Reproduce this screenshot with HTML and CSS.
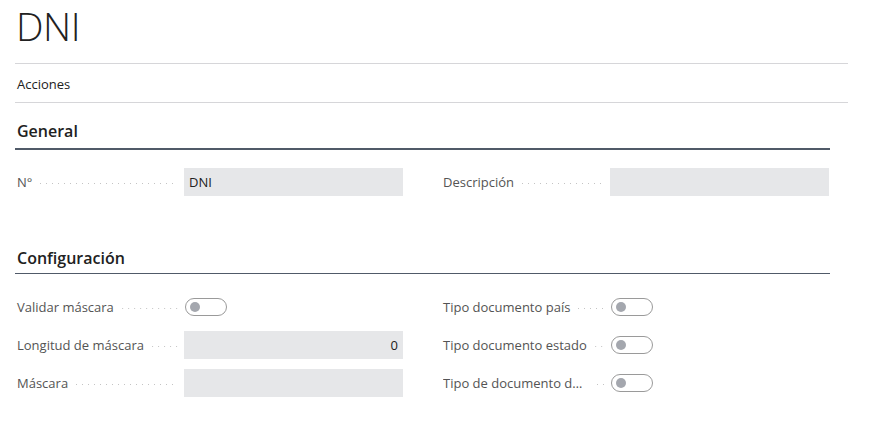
FILE: index.html
```html
<!DOCTYPE html>
<html lang="es">
<head>
<meta charset="utf-8">
<title>DNI</title>
<link rel="stylesheet" href="styles.css">
</head>
<body>
<div class="page">
  <h1 class="title">DNI</h1>
  <div class="actions"><span class="actions-item">Acciones</span></div>

  <section class="group group-general">
    <h2 class="group-title">General</h2>
    <div class="group-line thick"></div>
    <div class="grid">
      <div class="col">
        <div class="field">
          <div class="label"><span class="label-text">N°</span><span class="leader"></span></div>
          <div class="input">DNI</div>
        </div>
      </div>
      <div class="col">
        <div class="field">
          <div class="label"><span class="label-text">Descripción</span><span class="leader"></span></div>
          <div class="input"></div>
        </div>
      </div>
    </div>
  </section>

  <section class="group group-config">
    <h2 class="group-title">Configuración</h2>
    <div class="group-line"></div>
    <div class="grid">
      <div class="col">
        <div class="field">
          <div class="label"><span class="label-text">Validar máscara</span><span class="leader"></span></div>
          <div class="toggle-wrap"><span class="toggle"><span class="knob"></span></span></div>
        </div>
        <div class="field">
          <div class="label"><span class="label-text">Longitud de máscara</span><span class="leader"></span></div>
          <div class="input num">0</div>
        </div>
        <div class="field">
          <div class="label"><span class="label-text">Máscara</span><span class="leader"></span></div>
          <div class="input"></div>
        </div>
      </div>
      <div class="col">
        <div class="field">
          <div class="label"><span class="label-text">Tipo documento país</span><span class="leader"></span></div>
          <div class="toggle-wrap"><span class="toggle"><span class="knob"></span></span></div>
        </div>
        <div class="field">
          <div class="label"><span class="label-text">Tipo documento estado</span><span class="leader"></span></div>
          <div class="toggle-wrap"><span class="toggle"><span class="knob"></span></span></div>
        </div>
        <div class="field">
          <div class="label"><span class="label-text trunc">Tipo de documento de identidad</span><span class="leader short"></span></div>
          <div class="toggle-wrap"><span class="toggle"><span class="knob"></span></span></div>
        </div>
      </div>
    </div>
  </section>
</div>
</body>
</html>
```

FILE: styles.css
```css
html, body {
  margin: 0;
  padding: 0;
  background: #ffffff;
}

body {
  font-family: "Open Sans", "Noto Sans", "Liberation Sans", sans-serif;
  font-size: 13px;
  color: #212121;
}

.page {
  padding: 0 22px 0 15px;
  width: 833px;
}

.title {
  margin: 0;
  padding: 0 0 0 1px;
  height: 63px;
  font-size: 39px;
  font-weight: 300;
  line-height: 52px;
  color: #212121;
  letter-spacing: -0.5px;
}

.actions {
  border-top: 1px solid #d6d6d9;
  border-bottom: 1px solid #d6d6d9;
  height: 38px;
  display: flex;
  align-items: center;
  padding-left: 2px;
}

.actions-item {
  font-size: 13px;
  color: #212121;
  padding-top: 1px;
}

.group {
  width: 815px;
}

.group-title {
  margin: 0;
  padding-left: 2px;
  font-size: 16px;
  font-weight: 600;
  color: #212121;
  line-height: 22px;
}

.group-general .group-title {
  margin-top: 17px;
}

.group-config .group-title {
  margin-top: 51px;
}

.group-line {
  height: 1px;
  background: #505a68;
  margin-top: 4px;
}

.group-line.thick {
  height: 2px;
  margin-top: 6px;
}

.group-general .grid {
  margin-top: 18px;
}

.group-config .grid {
  margin-top: 19px;
}

.grid {
  display: grid;
  grid-template-columns: 388px 388px;
  column-gap: 38px;
}

.col {
  display: flex;
  flex-direction: column;
  gap: 10px;
}

.field {
  display: flex;
  align-items: center;
  height: 28px;
}

.label {
  width: 169px;
  flex: none;
  display: flex;
  align-items: center;
  padding-left: 2px;
  box-sizing: border-box;
  color: #545454;
  font-size: 13px;
  min-width: 0;
}

.label-text {
  white-space: nowrap;
  flex: none;
}

.label-text.trunc {
  flex: 0 1 auto;
  overflow: hidden;
  text-overflow: ellipsis;
  max-width: 142px;
  width: 142px;
}

.leader {
  flex: 1;
  height: 1px;
  margin: 2px 6px 0 8px;
  background-image: repeating-linear-gradient(to right, #c4c4c4 0, #c4c4c4 1px, transparent 1px, transparent 6px);
  background-position: right center;
  min-width: 2px;
}

.leader.short {
  margin-left: 12px;
}

.input {
  width: 219px;
  height: 28px;
  background: #e6e7e9;
  box-sizing: border-box;
  padding: 0 5px;
  line-height: 28px;
  color: #212121;
  font-size: 13px;
}

.input.num {
  text-align: right;
  padding-right: 5px;
}

.toggle-wrap {
  height: 28px;
  display: flex;
  align-items: center;
  padding-left: 1px;
  margin-top: -1px;
}

.toggle {
  width: 42px;
  height: 18px;
  box-sizing: border-box;
  border: 1px solid #9a9a9a;
  border-radius: 10px;
  display: flex;
  align-items: center;
  padding-left: 4px;
}

.knob {
  width: 10px;
  height: 10px;
  border-radius: 50%;
  background: #a4a7ae;
}
```
